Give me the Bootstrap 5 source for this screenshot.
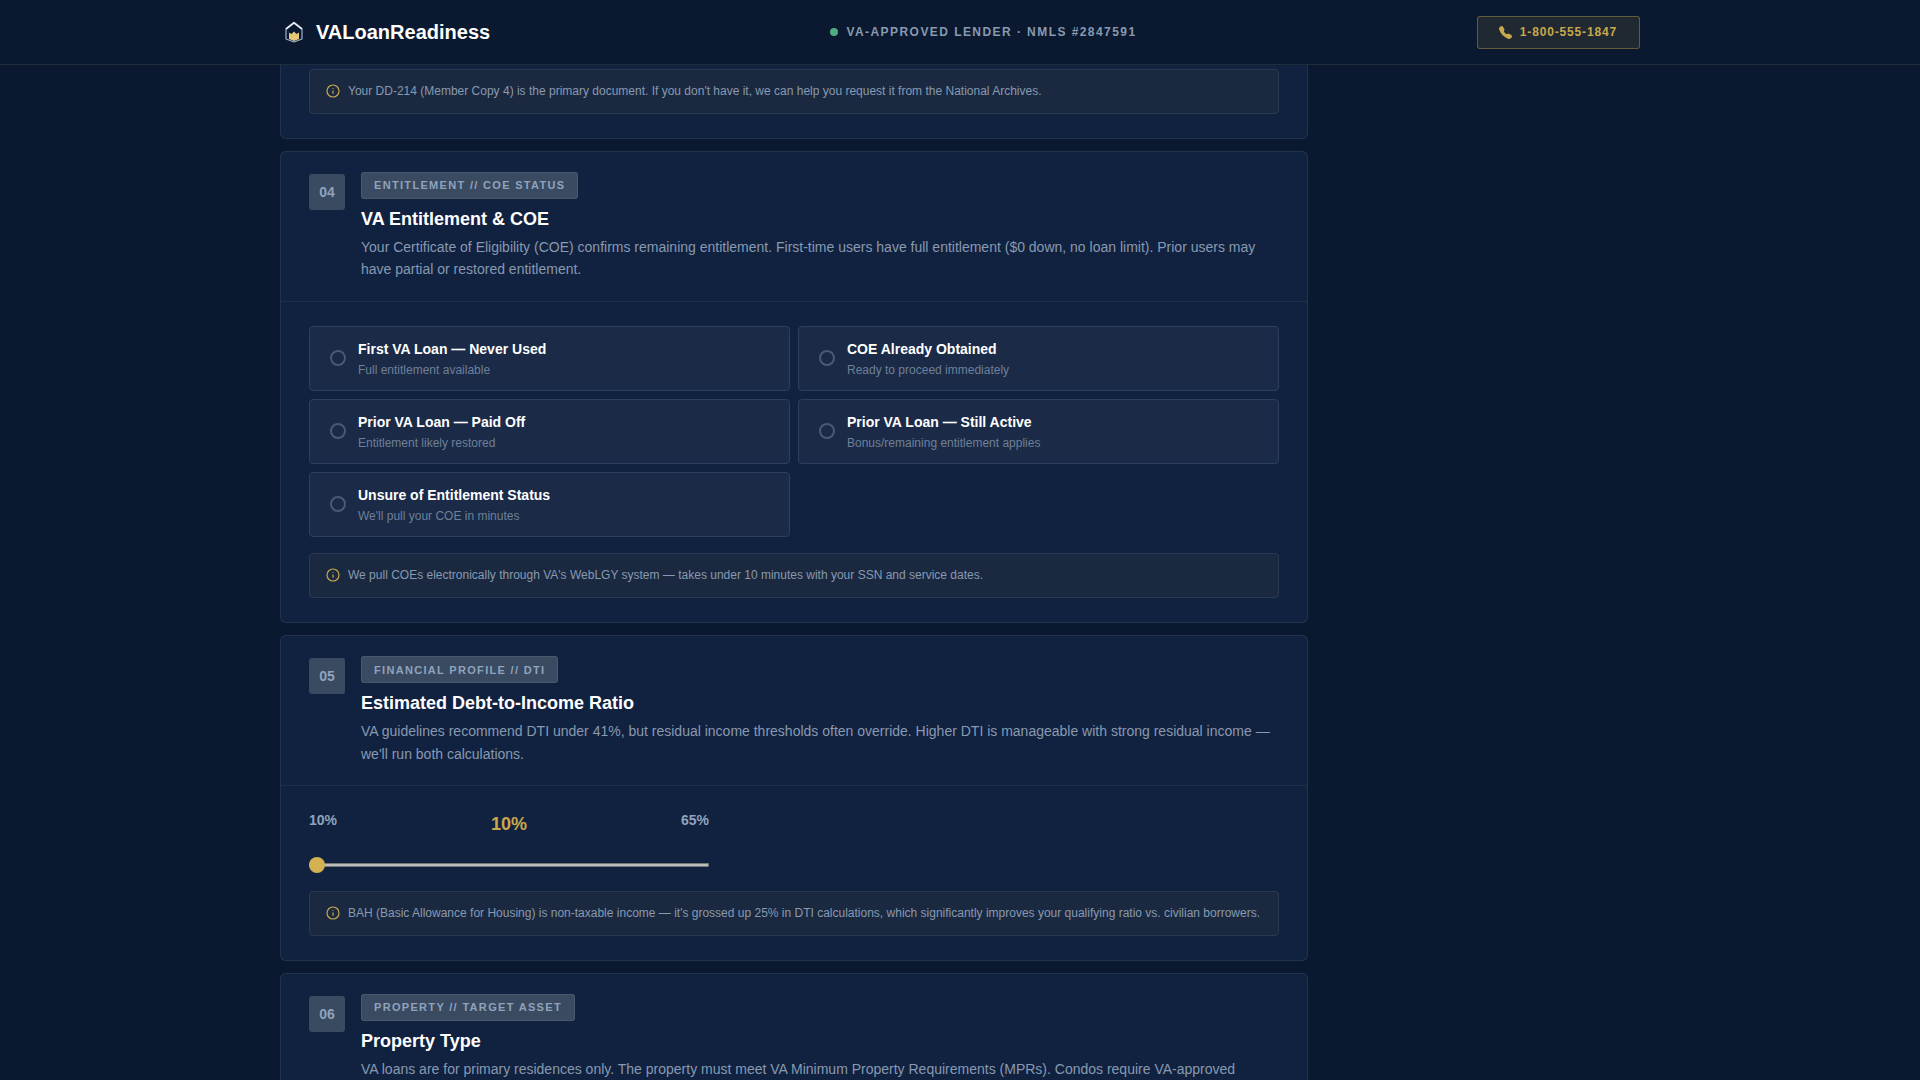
<!DOCTYPE html>
<html lang="en">
<head>
    <meta charset="UTF-8">
    <meta name="viewport" content="width=device-width, initial-scale=1.0">
    <title>VALoanReadiness</title>
    <link href="https://cdn.jsdelivr.net/npm/bootstrap@5.3.0/dist/css/bootstrap.min.css" rel="stylesheet">
    <style>
        html, body { height: 100%; overflow: hidden; }
        body { background: #0a192f; font-family: "Liberation Sans", Arial, sans-serif; color: #8899b0; }
        .topbar { height: 65px; background: #0a192f; border-bottom: 1px solid #1f2d3b; }
        .wrap { width: 1360px; margin: 0 auto; }
        .brand { font-size: 20px; font-weight: 700; color: #fff; }
        .logo { width: 28px; height: 28px; }
        .status { font-size: 12px; font-weight: 700; letter-spacing: 1.44px; color: #8899b0; }
        .dot { width: 8px; height: 8px; border-radius: 50%; background: #4caf82; }
        .phone { height: 33px; padding: 0 22px 0 21px; font-size: 12px; font-weight: 700; letter-spacing: .84px; color: #c9a84c; background: rgba(201,168,76,.12); border: 1px solid rgba(201,168,76,.4); border-radius: 3px; }
        .phone:hover { color: #c9a84c; background: rgba(201,168,76,.12); border-color: rgba(201,168,76,.4); }
        .phone svg { width: 13px; height: 13px; }
        .main-col { width: 1028px; }
        .step { background: #112240; border: 1px solid rgba(255,255,255,.08); border-radius: 6px; margin-bottom: 12px; }
        .step-cut { border-top: 0; border-radius: 0 0 6px 6px; padding: 4px 28px 24px; }
        .step-head { padding: 20px 28px 20.4px; border-bottom: 1px solid rgba(255,255,255,.06); gap: 16px; }
        .step-body { padding: 24px 28px; }
        .num { flex: 0 0 36px; height: 36px; margin-top: 2px; background: #3a4a60; border-radius: 3px; font-size: 14px; font-weight: 700; color: #8fa3bd; }
        .tag { height: 27px; padding: 0 12px; font-size: 11px; font-weight: 700; letter-spacing: 1.32px; color: #8fa3bd; background: #3a4a60; border: 1px solid rgba(255,255,255,.08); border-radius: 3px; }
        .step h2 { font-size: 18px; font-weight: 700; line-height: 23.4px; color: #fff; margin: 9px 0 4.4px; }
        .desc { font-size: 14px; line-height: 22.4px; color: #8899b0; margin: 0; }
        .opt { height: 65px; padding: 0 20px; gap: 12px; background: rgba(255,255,255,.04); border: 1px solid #2c3f5e; border-radius: 4px; }
        .opt .form-check-input { width: 16px; height: 16px; margin: -2px 0 0; flex: none; background-color: transparent; border: 2px solid #4a5a72; }
        .opt-text { padding-top: 2px; }
        .opt-title { font-size: 14px; font-weight: 700; line-height: 20px; color: #fff; }
        .opt-sub { font-size: 12px; line-height: 19px; margin-top: 2px; color: #6f8098; }
        .note { padding: 12px 16px; gap: 8px; font-size: 12px; line-height: 19.2px; color: #8899b0; background: rgba(201,168,76,.05); border: 1px solid #2b3a50; border-radius: 4px; }
        .note svg { flex: none; width: 14px; height: 14px; margin-top: -1px; }
        .slider-box { width: 400px; }
        .slider-lab { font-size: 14px; font-weight: 700; line-height: 20px; color: #8fa3bd; }
        .slider-val { font-size: 18px; font-weight: 700; line-height: 28px; color: #c9a84c; }
        .slider-box input { display: block; width: 400px; height: 16px; margin: 19px 0 17.500px; appearance: none; -webkit-appearance: none; background: transparent; }
        .slider-box input::-webkit-slider-runnable-track { height: 4px; background: #bdbdbd; box-shadow: inset 0 0 0 1px #767676; border-radius: 2px; }
        .slider-box input::-webkit-slider-thumb { -webkit-appearance: none; width: 16px; height: 16px; margin-top: -6px; border: 0; border-radius: 50%; background: #d4b254; }
    </style>
</head>
<body>
    <header class="topbar">
        <div class="wrap h-100 d-flex align-items-center justify-content-between">
            <div class="brand d-flex align-items-center gap-2">
                <svg class="logo" viewBox="0 0 28 28" fill="none" stroke-linejoin="round">
                    <path d="M6 10.500v10.500l8 3 8-3V10.500" stroke="#9fb2c8" stroke-width="1.200"/>
                    <path d="M6 11 14 4.800 22 11" stroke="#e6edf5" stroke-width="1.800"/>
                    <path d="M9 14.500l2.500 1.500L14 13.500l2.500 2.500 2.500-1.500V21l-5 2-5-2z" fill="#e8c678"/>
                </svg>
                <span>VALoanReadiness</span>
            </div>
            <div class="status d-flex align-items-center gap-2">
                <span class="dot"></span>
                <span>VA-APPROVED LENDER · NMLS #2847591</span>
            </div>
            <a class="btn phone d-flex align-items-center gap-2" href="#">
                <svg viewBox="0 0 16 16" fill="#c9a84c"><path d="M1.885.511a1.745 1.745 0 0 1 2.610.163L6.290 2.980c.329.423.445.974.315 1.494l-.547 2.190a.678.678 0 0 0 .178.643l2.457 2.457a.678.678 0 0 0 .644.178l2.189-.547a1.745 1.745 0 0 1 1.494.315l2.306 1.794c.829.645.905 1.870.163 2.611l-1.034 1.034c-.74.74-1.846 1.065-2.877.702a18.634 18.634 0 0 1-7.010-4.420 18.634 18.634 0 0 1-4.420-7.009c-.362-1.030-.037-2.137.703-2.877L1.885.511z"/></svg>
                <span>1-800-555-1847</span>
            </a>
        </div>
    </header>

    <main class="wrap">
        <div class="main-col">
            <section class="step step-cut">
                <div class="note d-flex align-items-center">
                    <svg viewBox="0 0 14 14" fill="none" stroke="#c9a84c"><circle cx="7" cy="7" r="6" stroke-width="1.2"/><path d="M7 6.500v3.200M7 4.200v.9" stroke-width="1.2"/></svg>
                    <span>Your DD-214 (Member Copy 4) is the primary document. If you don't have it, we can help you request it from the National Archives.</span>
                </div>
            </section>

            <section class="step">
                <div class="step-head d-flex">
                    <div class="num d-flex align-items-center justify-content-center">04</div>
                    <div>
                        <span class="tag d-inline-flex align-items-center">ENTITLEMENT // COE STATUS</span>
                        <h2>VA Entitlement &amp; COE</h2>
                        <p class="desc">Your Certificate of Eligibility (COE) confirms remaining entitlement. First-time users have full entitlement ($0 down, no loan limit). Prior users may have partial or restored entitlement.</p>
                    </div>
                </div>
                <div class="step-body">
                    <div class="row g-2 mb-3">
                        <div class="col-6"><label class="opt d-flex align-items-center"><input class="form-check-input" type="radio" name="ent"><span class="opt-text"><span class="opt-title d-block">First VA Loan — Never Used</span><span class="opt-sub d-block">Full entitlement available</span></span></label></div>
                        <div class="col-6"><label class="opt d-flex align-items-center"><input class="form-check-input" type="radio" name="ent"><span class="opt-text"><span class="opt-title d-block">COE Already Obtained</span><span class="opt-sub d-block">Ready to proceed immediately</span></span></label></div>
                        <div class="col-6"><label class="opt d-flex align-items-center"><input class="form-check-input" type="radio" name="ent"><span class="opt-text"><span class="opt-title d-block">Prior VA Loan — Paid Off</span><span class="opt-sub d-block">Entitlement likely restored</span></span></label></div>
                        <div class="col-6"><label class="opt d-flex align-items-center"><input class="form-check-input" type="radio" name="ent"><span class="opt-text"><span class="opt-title d-block">Prior VA Loan — Still Active</span><span class="opt-sub d-block">Bonus/remaining entitlement applies</span></span></label></div>
                        <div class="col-6"><label class="opt d-flex align-items-center"><input class="form-check-input" type="radio" name="ent"><span class="opt-text"><span class="opt-title d-block">Unsure of Entitlement Status</span><span class="opt-sub d-block">We'll pull your COE in minutes</span></span></label></div>
                    </div>
                    <div class="note d-flex align-items-center">
                        <svg viewBox="0 0 14 14" fill="none" stroke="#c9a84c"><circle cx="7" cy="7" r="6" stroke-width="1.2"/><path d="M7 6.500v3.200M7 4.200v.9" stroke-width="1.2"/></svg>
                        <span>We pull COEs electronically through VA's WebLGY system — takes under 10 minutes with your SSN and service dates.</span>
                    </div>
                </div>
            </section>

            <section class="step">
                <div class="step-head d-flex">
                    <div class="num d-flex align-items-center justify-content-center">05</div>
                    <div>
                        <span class="tag d-inline-flex align-items-center">FINANCIAL PROFILE // DTI</span>
                        <h2>Estimated Debt-to-Income Ratio</h2>
                        <p class="desc">VA guidelines recommend DTI under 41%, but residual income thresholds often override. Higher DTI is manageable with strong residual income — we'll run both calculations.</p>
                    </div>
                </div>
                <div class="step-body">
                    <div class="slider-box">
                        <div class="d-flex justify-content-between align-items-start">
                            <span class="slider-lab">10%</span>
                            <span class="slider-val">10%</span>
                            <span class="slider-lab">65%</span>
                        </div>
                        <input type="range" min="10" max="65" value="10">
                    </div>
                    <div class="note d-flex align-items-center">
                        <svg viewBox="0 0 14 14" fill="none" stroke="#c9a84c"><circle cx="7" cy="7" r="6" stroke-width="1.2"/><path d="M7 6.500v3.200M7 4.200v.9" stroke-width="1.2"/></svg>
                        <span>BAH (Basic Allowance for Housing) is non-taxable income — it's grossed up 25% in DTI calculations, which significantly improves your qualifying ratio vs. civilian borrowers.</span>
                    </div>
                </div>
            </section>

            <section class="step">
                <div class="step-head d-flex">
                    <div class="num d-flex align-items-center justify-content-center">06</div>
                    <div>
                        <span class="tag d-inline-flex align-items-center">PROPERTY // TARGET ASSET</span>
                        <h2>Property Type</h2>
                        <p class="desc">VA loans are for primary residences only. The property must meet VA Minimum Property Requirements (MPRs). Condos require VA-approved</p>
                    </div>
                </div>
            </section>
        </div>
    </main>
    <script src="https://cdn.jsdelivr.net/npm/bootstrap@5.3.0/dist/js/bootstrap.bundle.min.js"></script>
</body>
</html>
